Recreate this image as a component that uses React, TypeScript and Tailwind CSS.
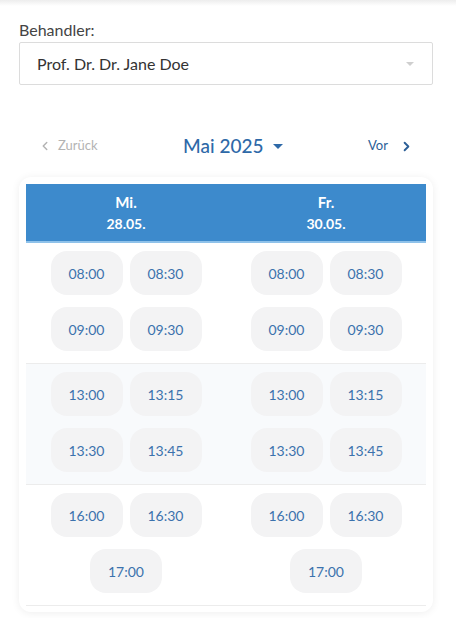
import { ChevronLeft, ChevronRight } from 'lucide-react';

const font = { fontFamily: 'Lato, "Noto Sans", sans-serif' };

const sections = [
  { times: ['08:00', '08:30', '09:00', '09:30'], shaded: false },
  { times: ['13:00', '13:15', '13:30', '13:45'], shaded: true },
  { times: ['16:00', '16:30', '17:00'], shaded: false },
];

const days = [
  { name: 'Mi.', date: '28.05.' },
  { name: 'Fr.', date: '30.05.' },
];

function Slot({ time }: { time: string }) {
  return (
    <button className="w-[72px] h-[44px] rounded-[16px] bg-[#f3f3f4] text-[14px] text-[#3b72ad]">
      {time}
    </button>
  );
}

export default function App() {
  return (
    <div className="min-h-[618px] bg-white" style={font}>
      <div className="h-[6px] bg-gradient-to-b from-[#ededed] to-white" />
      <div className="pl-[19px] pr-[23px]">
        {/* Behandler */}
        <div className="mt-[13px] text-[16px] leading-[22px] text-[#444]">Behandler:</div>
        <div className="mt-[1px] h-[43px] border border-[#dcdcdc] rounded-[2px] flex items-center justify-between pl-[17px] pr-[18px]">
          <span className="text-[16px] text-[#333]">Prof. Dr. Dr. Jane Doe</span>
          <span className="w-0 h-0 border-l-[4px] border-r-[4px] border-t-[4px] border-l-transparent border-r-transparent border-t-[#cfcfcf]" />
        </div>

        {/* Navigation */}
        <div className="mt-[41px] h-[40px] flex items-center justify-between pl-[19px] pr-[19px]">
          <button className="flex items-center gap-[6px] text-[13px] text-[#b3b3b3]">
            <ChevronLeft className="w-[14px] h-[14px]" strokeWidth={2.5} />
            Zurück
          </button>
          <button className="flex items-center gap-[9px] text-[19px] text-[#2e69a8] font-medium">
            Mai 2025
            <span className="w-0 h-0 border-l-[5px] border-r-[5px] border-t-[5px] border-l-transparent border-r-transparent border-t-[#2e69a8]" />
          </button>
          <button className="flex items-center gap-[11px] text-[13px] text-[#2c5f97]">
            Vor
            <ChevronRight className="w-[15px] h-[15px]" strokeWidth={3} />
          </button>
        </div>

        {/* Calendar card */}
        <div className="mt-[11px] rounded-[12px] bg-white p-[7px] pb-[6px] shadow-[0_1px_8px_rgba(0,0,0,0.07)]">
          <div className="grid grid-cols-2 h-[59px] bg-[#3d8acc] border-b-2 border-[#8fc2ea] text-white font-bold text-[14px]">
            {days.map((d) => (
              <div key={d.name} className="flex flex-col items-center justify-center leading-[22px] pt-[1px]">
                <span className="text-[15px]">{d.name}</span>
                <span>{d.date}</span>
              </div>
            ))}
          </div>
          {sections.map((s, i) => (
            <div
              key={i}
              className={`grid grid-cols-2 pt-[8px] pb-[12px] border-b border-[#ececec] ${s.shaded ? 'bg-[#f8fafc]' : 'bg-white'}`}
            >
              {days.map((d) => (
                <div key={d.name} className="mx-auto w-[151px] flex flex-wrap justify-center gap-x-[7px] gap-y-[12px]">
                  {s.times.map((t) => (
                    <Slot key={t} time={t} />
                  ))}
                </div>
              ))}
            </div>
          ))}
        </div>
      </div>
    </div>
  );
}
